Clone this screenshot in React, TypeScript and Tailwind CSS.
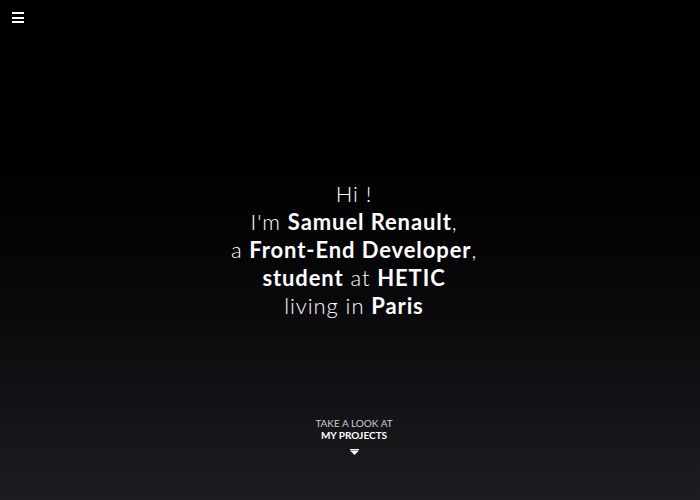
import React from 'react';

const Menu: React.FC = () => (
  <button className="absolute top-3 left-3 flex flex-col gap-[2.5px] w-3" aria-label="menu">
    <span className="block h-[2px] w-3 bg-white" />
    <span className="block h-[2px] w-3 bg-white" />
    <span className="block h-[2px] w-3 bg-white" />
  </button>
);

const App: React.FC = () => {
  return (
    <div className="relative h-[500px] w-full overflow-hidden bg-linear-to-b from-black to-[#1d1c21] text-white font-['Lato','Liberation_Sans',sans-serif]">
      <Menu />
      <div className="flex h-full flex-col items-center justify-center pl-2">
        <p className="text-center text-[22px] leading-[28px] font-light tracking-[0.9px]">
          Hi !<br />
          I'm <b className="font-bold">Samuel Renault</b>,<br />
          a <b className="font-bold">Front-End Developer</b>,<br />
          <b className="font-bold">student</b> at <b className="font-bold">HETIC</b><br />
          living in <b className="font-bold">Paris</b>
        </p>
      </div>
      <div className="absolute left-0 right-0 top-[418px] flex flex-col items-center pl-2">
        <span className="text-[10px] leading-[11.5px] text-[#cfcfcf] uppercase">Take a look at</span>
        <span className="text-[10px] leading-[11.5px] font-bold uppercase">My projects</span>
        <svg className="mt-[8px]" width="9" height="6" viewBox="0 0 9 6">
          <rect x="0" y="0" width="9" height="1" fill="white" />
          <polygon points="0,1.5 9,1.5 4.5,6" fill="white" />
        </svg>
      </div>
    </div>
  );
};

export default App;
